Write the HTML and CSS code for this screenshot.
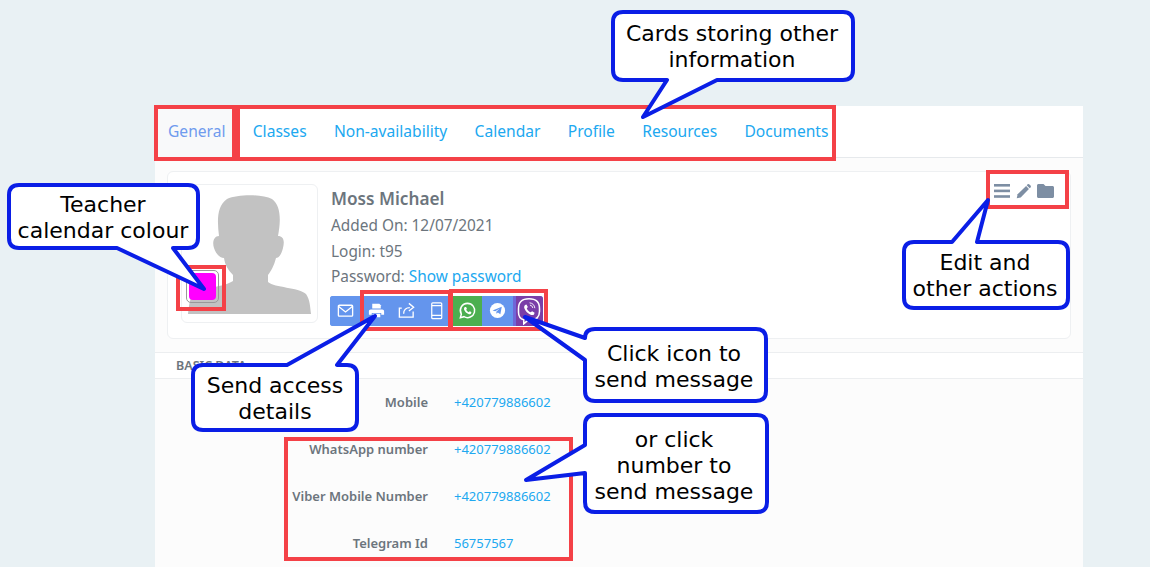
FILE: index.html
```html
<!DOCTYPE html>
<html lang="en">
<head>
    <meta charset="utf-8">
    <title>Teacher details</title>
    <meta name="viewport" content="width=device-width, initial-scale=1">
    <link rel="stylesheet" href="styles.css">
</head>
<body>
    <div class="app">
        <nav class="tabs">
            <a class="tab active">General</a>
            <a class="tab">Classes</a>
            <a class="tab">Non-availability</a>
            <a class="tab">Calendar</a>
            <a class="tab">Profile</a>
            <a class="tab">Resources</a>
            <a class="tab">Documents</a>
        </nav>

        <div class="main">
            <div class="card">
                <div class="photo">
                    <svg class="avatar" viewBox="188 194 123 120">
                        <path d="M219 236C217 220 217 206 227 199C238 194 262 194 272 199C281 206 281 220 278 236C283 236 285 240 283 248C281 256 278 258 276 258C274 266 271 271 268 275L268 282C275 288 298 287 306 294C310 300 310 306 311 314L188 314C189 305 190 297 194 293C202 288 224 287 233 281L233 275C228 270 225 265 224 258C220 258 216 254 214 248C212 242 214 236 219 236Z"/>
                    </svg>
                    <div class="swatch"><span></span></div>
                </div>
                <div class="info">
                    <h2 class="name">Moss Michael</h2>
                    <p>Added On: 12/07/2021</p>
                    <p>Login: t95</p>
                    <p>Password: <a>Show password</a></p>
                    <div class="btns">
                        <a class="btn">
                            <svg viewBox="0 0 20 20" fill="none" stroke="#fff" stroke-width="1.4"><rect x="2.5" y="4.5" width="15" height="11.5" rx="1"/><path d="M2.5 5.5L10 11.5L17.5 5.5"/></svg>
                        </a>
                        <a class="btn">
                            <svg viewBox="0 0 20 20" fill="#fff"><path d="M5.5 3H13L14.5 4.5V8H5.5Z"/><path d="M4 9H16C17.2 9 18 9.8 18 11V14.5H15V12.5H5V14.5H2V11C2 9.8 2.8 9 4 9Z"/><path d="M6 13.5H14V17H6Z"/></svg>
                        </a>
                        <a class="btn">
                            <svg viewBox="0 0 20 20" fill="none" stroke="#fff" stroke-width="1.4"><path d="M5 7.5H2.5V17H17V11"/><path d="M7 13.5C7 9.5 9.5 7 13.5 7"/><path d="M12.5 2.5L17.5 6.5L12.5 10.5" fill="none"/></svg>
                        </a>
                        <a class="btn">
                            <svg viewBox="0 0 20 20" fill="none" stroke="#fff" stroke-width="1.3"><rect x="5" y="2" width="10.5" height="16.5" rx="1"/><path d="M5 4.8H15.5M5 15.2H15.5"/></svg>
                        </a>
                        <a class="btn whatsapp">
                            <svg viewBox="0 0 20 20"><path d="M10 2.5A7.5 7.5 0 0 0 3.5 13.8L2.5 17.5L6.3 16.5A7.5 7.5 0 1 0 10 2.5Z" fill="none" stroke="#fff" stroke-width="1.6"/><path d="M7.3 6.2C6.4 6.8 6 8 6.6 9.5C7.4 11.4 9 13 11 13.7C12.4 14.2 13.6 13.6 14 12.6L14 11.7L12.3 10.9L11.4 11.9C10.2 11.4 9.2 10.4 8.6 9.2L9.4 8.2L8.5 6.2Z" fill="#fff"/></svg>
                        </a>
                        <a class="btn">
                            <svg viewBox="0 0 20 20"><circle cx="10" cy="10" r="8" fill="#fff"/><path d="M4.8 10L14.5 6L13 14L10.4 12.2L9 13.5L8.7 11.2L12.4 7.8L7.6 10.8Z" fill="#6495ed"/></svg>
                        </a>
                        <a class="btn viber">
                            <svg viewBox="0 0 24 24" fill="none" stroke="#fff"><path d="M12 1.5C6 1.5 3 4 3 10V13C3 16.5 4.5 18.6 7.5 19.5V23L11 20H12.5C18.5 20 21 17 21 12.5V10C21 4 18 1.5 12 1.5Z" stroke-width="1.3"/><path d="M8.6 6.8L9.8 6.4L11 8.6L10.1 9.8C10.8 11.3 11.9 12.4 13.4 13.1L14.7 12.2L16.8 13.6L16.3 15C15.4 15.8 14.2 15.6 12.9 15C10.6 13.8 9 12 8 9.6C7.7 8.4 7.9 7.5 8.6 6.8Z" fill="#fff" stroke="none"/><path d="M12.5 5C15 5.2 16.8 7 17 9.6M12.8 7C14.2 7.2 15 8 15.2 9.4" stroke-width="0.8"/></svg>
                        </a>
                    </div>
                </div>
                <div class="actions">
                    <svg class="act-bars" viewBox="0 0 16 14" fill="#7d8ea3"><rect y="0" width="16" height="2.6"/><rect y="5.6" width="16" height="2.6"/><rect y="11.2" width="16" height="2.6"/></svg>
                    <svg class="act-pencil" viewBox="0 0 16 16" fill="#7d8ea3"><path d="M10.8 2.2L13.8 5.2L5 14.3L0.8 15.2L1.7 11Z"/><path d="M12.2 0.5C13 -0.2 13.8 0 14.6 0.7L15.3 1.4C16 2.2 16.2 3 15.5 3.8L14.6 4.6L11.4 1.4Z"/></svg>
                    <svg class="act-folder" viewBox="0 0 17 14" fill="#7d8ea3"><path d="M1.5 0H6.5L8.5 2H15.5C16.3 2 17 2.7 17 3.5V12.5C17 13.3 16.3 14 15.5 14H1.5C0.7 14 0 13.3 0 12.5V1.5C0 0.7 0.7 0 1.5 0Z"/></svg>
                </div>
            </div>
        </div>

        <div class="section-tab">Basic Data</div>

        <div class="details">
            <div class="row"><span class="label">Mobile</span><a class="value">+420779886602</a></div>
            <div class="row"><span class="label">WhatsApp number</span><a class="value">+420779886602</a></div>
            <div class="row"><span class="label">Viber Mobile Number</span><a class="value">+420779886602</a></div>
            <div class="row"><span class="label">Telegram Id</span><a class="value">56757567</a></div>
        </div>
    </div>

    <!-- annotations drawn over the screenshot -->
    <svg class="notes" viewBox="0 0 1150 567">
        <rect class="mark" x="156" y="107" width="78" height="52"/>
        <rect class="mark" x="238" y="107" width="596" height="52"/>
        <rect class="mark" x="178" y="267" width="46" height="42"/>
        <rect class="mark" x="362" y="292" width="88" height="37"/>
        <rect class="mark" x="451" y="291" width="95" height="38"/>
        <rect class="mark" x="988" y="172" width="79" height="35"/>
        <rect class="mark" x="286" y="439" width="285" height="120"/>

        <path class="bubble" d="M623 12H843Q853 12 853 22V70Q853 80 843 80H717L643 117L667 80H623Q613 80 613 70V22Q613 12 623 12Z"/>
        <text x="732" y="41">Cards storing other</text>
        <text x="732" y="67">information</text>

        <path class="bubble" d="M19 185H188Q198 185 198 195V238Q198 248 188 248H173L204 289L117 248H19Q9 248 9 238V195Q9 185 19 185Z"/>
        <text x="103" y="212">Teacher</text>
        <text x="103" y="238">calendar colour</text>

        <path class="bubble" d="M914 242H952L988 200L977 242H1058Q1068 242 1068 252V298Q1068 308 1058 308H914Q904 308 904 298V252Q904 242 914 242Z"/>
        <text x="985" y="270">Edit and</text>
        <text x="985" y="296">other actions</text>

        <path class="bubble" d="M203 365H287L375 316L337 365H347Q357 365 357 375V420Q357 430 347 430H203Q193 430 193 420V375Q193 365 203 365Z"/>
        <text x="275" y="393">Send access</text>
        <text x="275" y="419">details</text>

        <path class="bubble" d="M595 329H756Q766 329 766 339V391Q766 401 756 401H595Q585 401 585 391V360L525 317L585 338Q585 329 595 329Z"/>
        <text x="674" y="361">Click icon to</text>
        <text x="674" y="387">send message</text>

        <path class="bubble" d="M595 415H757Q767 415 767 425V502Q767 512 757 512H595Q585 512 585 502V473L526 480L585 445V425Q585 415 595 415Z"/>
        <text x="674" y="447">or click</text>
        <text x="674" y="473">number to</text>
        <text x="674" y="499">send message</text>
    </svg>
</body>
</html>
```

FILE: styles.css
```css
* {
    margin: 0;
    padding: 0;
    box-sizing: border-box;
}

body {
    font-family: "Noto Sans", "Open Sans", sans-serif;
    font-size: 15.4px;
    color: #6c757d;
    background: #e9f1f4;
    height: 100vh;
    overflow: hidden;
    padding-top: 106px;
    position: relative;
}

a {
    color: #20a8f0;
}

.app {
    margin-left: 155px;
    width: 928px;
    background: #fcfcfc;
}

.tabs {
    display: flex;
    height: 52px;
    background: #fff;
    border-bottom: 1px solid #e6e9ec;
    font-size: 15.6px;
}

.tab {
    display: flex;
    align-items: center;
    padding: 0 13.65px 2px;
    height: 51px;
}

.tab.active {
    background: #f8f9fa;
    color: #6f9bee;
    padding-left: 13px;
}

.main {
    padding: 13px 12px;
}

.card {
    display: flex;
    height: 168px;
    background: #fff;
    border: 1px solid #eef0f2;
    border-radius: 6px;
    padding: 12px 2px 0 13px;
}

.photo {
    position: relative;
    width: 137px;
    height: 139px;
    border: 1px solid #eef0f2;
    border-radius: 6px;
    padding: 9px 6px 0 6px;
}

.avatar {
    display: block;
    width: 123px;
    height: 120px;
    fill: #c2c2c2;
}

.swatch {
    position: absolute;
    left: 4px;
    top: 85px;
    width: 33px;
    height: 33px;
    border: 1px solid #999;
    border-radius: 5px;
    padding: 2px;
}

.swatch span {
    display: block;
    width: 27px;
    height: 27px;
    border-radius: 4px;
    background: #ff00ff;
}

.info {
    margin-left: 13px;
    padding-top: 1px;
    flex: 1;
}

.name {
    font-size: 17.2px;
    font-weight: 600;
    line-height: 28px;
}

.info p {
    line-height: 25.5px;
}

.btns {
    display: flex;
    margin-top: 6px;
    margin-left: -1px;
    width: 213px;
    height: 30px;
    border-radius: 3px;
    overflow: hidden;
    background: #6495ed;
}

.btn {
    width: 30.5px;
    padding-left: 1px;
    display: flex;
    align-items: center;
    justify-content: center;
    background: #6495ed;
}

.btn svg {
    width: 19px;
    height: 19px;
    flex: none;
}

.btn.whatsapp {
    background: #4caf50;
}

.btn.viber {
    background: #7a3ea8;
    border-left: 3px solid #6f66d8;
    padding-left: 0;
}

.btn.viber svg {
    width: 28px;
    height: 28px;
}

.actions {
    display: flex;
    align-items: flex-start;
    gap: 6px;
    margin-right: 14px;
}

.actions svg {
    display: block;
}

.act-bars {
    width: 16px;
    height: 14px;
}

.act-pencil {
    width: 15px;
    height: 15px;
}

.act-folder {
    width: 17px;
    height: 14px;
}

.section-tab {
    height: 27px;
    background: #fff;
    border-top: 1px solid #eceef0;
    border-bottom: 1px solid #eceef0;
    padding-left: 21px;
    font-size: 12.5px;
    font-weight: 600;
    line-height: 25px;
    text-transform: uppercase;
}

.details {
    border-bottom: 1px solid #e6e9ec;
}

.row {
    display: grid;
    grid-template-columns: 273px 1fr;
    column-gap: 26px;
    height: 47px;
    align-items: center;
    font-size: 13px;
    padding-bottom: 2px;
}

.label {
    text-align: right;
    font-weight: 600;
}

.notes {
    position: absolute;
    left: 0;
    top: 0;
    width: 1150px;
    height: 567px;
}

.mark {
    fill: none;
    stroke: #f44147;
    stroke-width: 4;
}

.bubble {
    fill: #fff;
    stroke: #0a1ee6;
    stroke-width: 4;
    stroke-linejoin: round;
}

.notes text {
    font-family: "DejaVu Sans", Verdana, sans-serif;
    font-size: 22px;
    fill: #000;
    text-anchor: middle;
}
```
